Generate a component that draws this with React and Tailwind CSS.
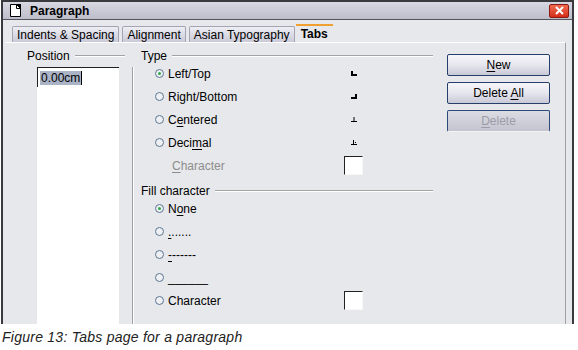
import React from "react";

const Radio = ({ checked }) => (
  <span className="relative w-[9px] h-[9px] rounded-full border border-[#5b7591] bg-[#eef0f4] flex items-center justify-center shrink-0">
    {checked && <span className="w-[3px] h-[3px] rounded-full bg-[#2fa84a]" />}
  </span>
);

const TabGlyph = ({ kind }) => {
  if (kind === "left")
    return (
      <svg width="6" height="5" viewBox="0 0 6 5">
        <rect x="0" y="0" width="2" height="5" fill="#000" />
        <rect x="0" y="3" width="6" height="2" fill="#000" />
      </svg>
    );
  if (kind === "right")
    return (
      <svg width="6" height="5" viewBox="0 0 6 5">
        <rect x="4" y="0" width="2" height="5" fill="#000" />
        <rect x="0" y="3" width="6" height="2" fill="#000" />
      </svg>
    );
  if (kind === "center")
    return (
      <svg width="6" height="5" viewBox="0 0 6 5">
        <rect x="2.5" y="0" width="1" height="5" fill="#000" />
        <rect x="0" y="4" width="6" height="1" fill="#000" />
      </svg>
    );
  return (
    <svg width="6" height="5" viewBox="0 0 6 5">
      <rect x="2" y="0" width="1" height="5" fill="#000" />
      <rect x="0" y="4" width="6" height="1" fill="#000" />
      <rect x="4" y="2" width="1" height="1" fill="#000" />
    </svg>
  );
};

const CharBox = () => (
  <span className="w-[19px] h-[19px] bg-white border-t border-l border-t-[#222] border-l-[#222] border-r border-b border-r-[#f8f8f8] border-b-[#f8f8f8] block" />
);

const OptionRow = ({ checked, label, glyph, box, disabled, indent }) => (
  <div className="h-[23px] flex items-center">
    <div className={`flex items-center gap-[4px] flex-1 ${indent ? "pl-[38px]" : "pl-[21px]"}`}>
      {!indent && <Radio checked={checked} />}
      <span className={disabled ? "text-[#8d8d8d]" : "text-black"}>{label}</span>
    </div>
    <div className="w-[19px] mr-[70px] flex items-center justify-center">
      {glyph && <TabGlyph kind={glyph} />}
      {box && <CharBox />}
    </div>
  </div>
);

const Legend = ({ children, pl }) => (
  <div className={`h-[13px] flex items-center ${pl}`}>
    <span className="text-black">{children}</span>
    <span className="flex-1 ml-[5px] h-px bg-[#a3a3a6] border-b border-b-white box-content" />
  </div>
);

const Button = ({ children, disabled }) => (
  <button
    className={`w-[103px] h-[22px] rounded-[2px] border flex items-center justify-center text-[12px] ${
      disabled
        ? "border-[#2c4a78] border-b-[#f4f4f4] bg-gradient-to-b from-[#dcdce4] to-[#c4c4d0] text-[#9c9ca8]"
        : "border-[#243f6b] bg-gradient-to-b from-[#f6f6fa] via-[#e6e6ee] to-[#c9c9d7] text-black"
    }`}
  >
    <span>{children}</span>
  </button>
);

const U = ({ children }) => <span className="underline underline-offset-[2px]">{children}</span>;

export default function App() {
  return (
    <div className="w-[578px] h-[350px] bg-white font-['Liberation_Sans',Arial,sans-serif] text-[12px] leading-none">
      <div className="ml-[1px] w-[573px] h-[324px] flex flex-col border-t-2 border-t-[#3a3a3e] border-l-2 border-l-[#3a3a3e] border-r-2 border-r-[#3a3a3e]">
        {/* title bar */}
        <div className="h-[18px] flex items-center bg-gradient-to-b from-[#d8d8e2] to-[#bdbdcb] border-b border-b-[#55555e]">
          <svg className="ml-[7px]" width="11" height="13" viewBox="0 0 11 13">
            <path d="M0.5 0.5 H6.5 L10.5 4.5 V12.5 H0.5 Z" fill="#fff" stroke="#000" />
            <path d="M6 0 L11 5 L11 0 Z" fill="#000" />
            <path d="M6.5 0.5 V4.5 H10.5" fill="none" stroke="#000" />
          </svg>
          <span className="ml-[9px] font-bold text-[12px] text-black">Paragraph</span>
          <div className="ml-auto mr-[3px] w-[20px] h-[14px] rounded-[2px] border border-[#8a1a10] bg-gradient-to-b from-[#f06a50] to-[#d42a18] flex items-center justify-center">
            <svg width="9" height="9" viewBox="0 0 9 9">
              <path d="M1 1 L8 8 M8 1 L1 8" stroke="#fff" strokeWidth="2" />
            </svg>
          </div>
        </div>

        {/* body */}
        <div className="flex-1 bg-[#e7e8eb] flex flex-col">
          {/* tabs */}
          <div className="h-[22px] flex items-end pl-[9px] gap-[3px]">
            <div className="h-[16px] px-[4px] flex items-center rounded-t-[2px] border border-b-0 border-[#a4a4b4] bg-gradient-to-b from-[#eeeef4] to-[#cacad8]">Indents &amp; Spacing</div>
            <div className="h-[16px] px-[4px] flex items-center rounded-t-[2px] border border-b-0 border-[#a4a4b4] bg-gradient-to-b from-[#eeeef4] to-[#cacad8]">Alignment</div>
            <div className="h-[16px] px-[4px] flex items-center rounded-t-[2px] border border-b-0 border-[#a4a4b4] bg-gradient-to-b from-[#eeeef4] to-[#cacad8]">Asian Typography</div>
            <div className="h-[18px] -ml-[2px] px-[5px] flex items-center border-t-2 border-t-[#f0a030] font-bold bg-[#e7e8eb]">Tabs</div>
          </div>

          {/* panel */}
          <div className="flex-1 ml-[2px] mr-[6px] flex border-t border-t-white border-r border-r-[#a0a0a4]">
            {/* position column */}
            <div className="w-[127px] flex flex-col pt-[6px]">
              <Legend pl="pl-[22px] pr-[7px]">Position</Legend>
              <div className="ml-[32px] w-[82px] mt-[5px] flex-1 flex flex-col">
                <div className="h-[20px] bg-white border-t border-l border-t-[#202020] border-l-[#202020] flex items-center pl-[2px]">
                  <span className="bg-[#aab4c6] px-[1px] h-[14px] flex items-center">0.00cm</span>
                  <span className="w-px h-[14px] bg-black" />
                </div>
                <div className="flex-1 bg-white" />
              </div>
            </div>

            {/* separator */}
            <div className="mt-[24px] w-[2px] flex">
              <div className="w-px bg-[#a0a0a4]" />
              <div className="w-px bg-white" />
            </div>

            {/* options */}
            <div className="w-[299px] flex flex-col pt-[6px]">
              <Legend pl="pl-[7px]">Type</Legend>
              <OptionRow checked label="Left/Top" glyph="left" />
              <OptionRow label="Right/Bottom" glyph="right" />
              <OptionRow label={<>C<U>e</U>ntered</>} glyph="center" />
              <OptionRow label={<>Deci<U>m</U>al</>} glyph="decimal" />
              <OptionRow indent disabled label={<><U>C</U>haracter</>} box />
              <div className="mt-[7px]">
                <Legend pl="pl-[7px]">Fill character</Legend>
              </div>
              <OptionRow checked label={<>N<U>o</U>ne</>} />
              <OptionRow label={<><U>.</U>......</>} />
              <OptionRow label={<><U>-</U>------</>} />
              <OptionRow label="______" />
              <OptionRow label="Character" box />
            </div>

            {/* buttons */}
            <div className="ml-[14px] pt-[11px] flex flex-col gap-[6px]">
              <Button><U>N</U>ew</Button>
              <Button>Delete <U>A</U>ll</Button>
              <Button disabled><U>D</U>elete</Button>
            </div>
          </div>
        </div>
      </div>

      {/* caption */}
      <div className="mt-[6px] pl-[2px] italic text-[14px] tracking-[0.25px] text-[#222]">
        Figure 13: Tabs page for a paragraph
      </div>
    </div>
  );
}
